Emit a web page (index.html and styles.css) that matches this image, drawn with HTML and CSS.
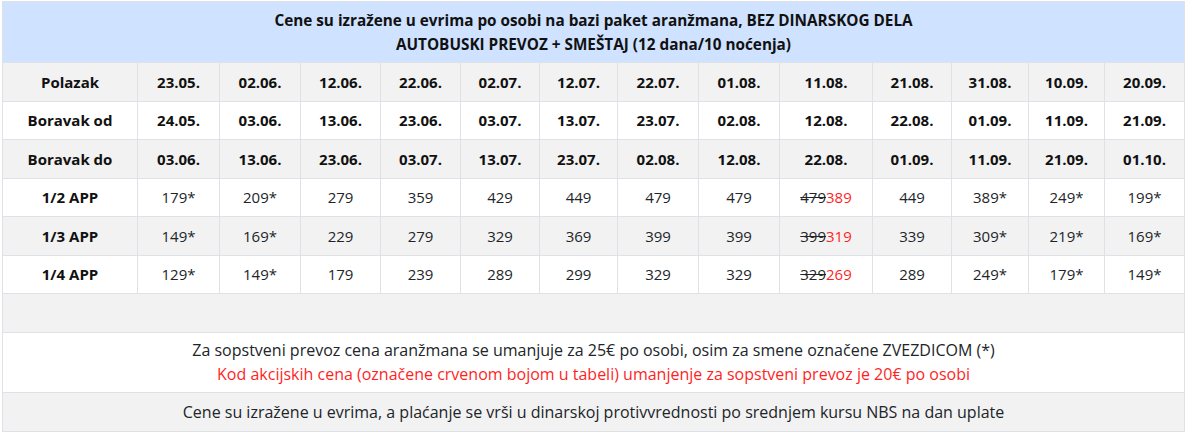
FILE: index.html
```html
<!DOCTYPE html>
<html lang="sr">
<head>
<meta charset="utf-8">
<title>Cenovnik</title>
<link rel="stylesheet" href="styles.css">
</head>
<body>
<div class="wrap">
<table class="prices">
  <colgroup>
    <col class="c-label">
    <col class="c1"><col class="c2"><col class="c3"><col class="c4"><col class="c5"><col class="c6"><col class="c7"><col class="c8"><col class="c9"><col class="c10"><col class="c11"><col class="c12"><col class="c13">
  </colgroup>
  <thead>
    <tr class="head">
      <th colspan="14">Cene su izražene u evrima po osobi na bazi paket aranžmana, BEZ DINARSKOG DELA<br>AUTOBUSKI PREVOZ + SMEŠTAJ (12 dana/10 noćenja)</th>
    </tr>
  </thead>
  <tbody>
    <tr class="alt bold">
      <td>Polazak</td><td>23.05.</td><td>02.06.</td><td>12.06.</td><td>22.06.</td><td>02.07.</td><td>12.07.</td><td>22.07.</td><td>01.08.</td><td>11.08.</td><td>21.08.</td><td>31.08.</td><td>10.09.</td><td>20.09.</td>
    </tr>
    <tr class="bold">
      <td>Boravak od</td><td>24.05.</td><td>03.06.</td><td>13.06.</td><td>23.06.</td><td>03.07.</td><td>13.07.</td><td>23.07.</td><td>02.08.</td><td>12.08.</td><td>22.08.</td><td>01.09.</td><td>11.09.</td><td>21.09.</td>
    </tr>
    <tr class="alt bold">
      <td>Boravak do</td><td>03.06.</td><td>13.06.</td><td>23.06.</td><td>03.07.</td><td>13.07.</td><td>23.07.</td><td>02.08.</td><td>12.08.</td><td>22.08.</td><td>01.09.</td><td>11.09.</td><td>21.09.</td><td>01.10.</td>
    </tr>
    <tr>
      <td class="label">1/2 APP</td><td>179*</td><td>209*</td><td>279</td><td>359</td><td>429</td><td>449</td><td>479</td><td>479</td><td><s>479</s><span class="red">389</span></td><td>449</td><td>389*</td><td>249*</td><td>199*</td>
    </tr>
    <tr class="alt">
      <td class="label">1/3 APP</td><td>149*</td><td>169*</td><td>229</td><td>279</td><td>329</td><td>369</td><td>399</td><td>399</td><td><s>399</s><span class="red">319</span></td><td>339</td><td>309*</td><td>219*</td><td>169*</td>
    </tr>
    <tr>
      <td class="label">1/4 APP</td><td>129*</td><td>149*</td><td>179</td><td>239</td><td>289</td><td>299</td><td>329</td><td>329</td><td><s>329</s><span class="red">269</span></td><td>289</td><td>249*</td><td>179*</td><td>149*</td>
    </tr>
    <tr class="alt empty">
      <td colspan="14"></td>
    </tr>
    <tr class="note">
      <td colspan="14">Za sopstveni prevoz cena aranžmana se umanjuje za 25€ po osobi, osim za smene označene ZVEZDICOM (*)<br><span class="red">Kod akcijskih cena (označene crvenom bojom u tabeli) umanjenje za sopstveni prevoz je 20€ po osobi</span></td>
    </tr>
    <tr class="alt foot">
      <td colspan="14">Cene su izražene u evrima, a plaćanje se vrši u dinarskoj protivvrednosti po srednjem kursu NBS na dan uplate</td>
    </tr>
  </tbody>
</table>
</div>
</body>
</html>
```

FILE: styles.css
```css
html, body {
  margin: 0;
  padding: 0;
  background: #ffffff;
}

.wrap {
  padding: 1px 2px 0 2px;
}

.prices {
  width: 1182px;
  border-collapse: collapse;
  table-layout: fixed;
  font-family: "Open Sans", "Noto Sans", sans-serif;
  font-size: 15px;
  color: #212529;
}

.c-label { width: 135px; }
.c1 { width: 82px; }
.c2 { width: 81px; }
.c3 { width: 80px; }
.c4 { width: 80px; }
.c5 { width: 79px; }
.c6 { width: 78px; }
.c7 { width: 81px; }
.c8 { width: 81px; }
.c9 { width: 93px; }
.c10 { width: 79px; }
.c11 { width: 77px; }
.c12 { width: 76px; }
.c13 { width: 80px; }

.prices th,
.prices td {
  border: 1px solid #dee2e6;
  text-align: center;
  vertical-align: middle;
  padding: 0 4px;
  height: 37.5px;
  line-height: 22px;
}

.head th {
  background: #cfe2ff;
  color: #111111;
  font-weight: 700;
  font-size: 15.3px;
  height: 60px;
  line-height: 24px;
  padding: 0;
}

.alt td {
  background: #f2f2f2;
}

.bold td,
.label {
  font-weight: 700;
  color: #111111;
}

.note td {
  height: 59.5px;
  line-height: 24px;
  font-size: 16px;
}

.foot td {
  height: 38px;
  font-size: 16px;
}

.red {
  color: #ff1f1f;
}

s {
  text-decoration-thickness: 1px;
}
```
